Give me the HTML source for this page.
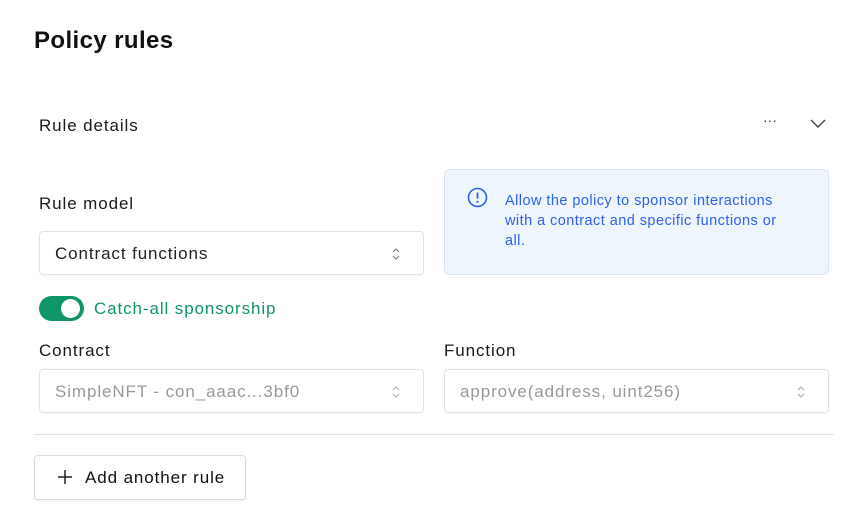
<!DOCTYPE html><html><head><style>
body{margin:0;width:863px;height:528px;background:#fff;font-family:"Liberation Sans",sans-serif;position:relative;overflow:hidden;color:#1a1a1a}
.a{position:absolute;letter-spacing:0.9px}
.sel{position:absolute;height:44px;border:1px solid #e2e2e2;border-radius:4px;box-sizing:border-box;font-size:17px;line-height:44px;padding-left:15px;letter-spacing:0.9px;box-shadow:0 1px 2px rgba(0,0,0,.04)}
.ud{position:absolute;right:22px;top:15px}
</style></head><body>
<div class="a" style="left:34px;top:27px;font-size:24px;font-weight:bold;color:#111;letter-spacing:0.4px">Policy rules</div>
<div class="a" style="left:39px;top:116px;font-size:17px">Rule details</div>
<div class="a" style="left:763px;top:112px;font-size:14px;color:#333;letter-spacing:0">···</div>
<svg class="a" style="left:810px;top:119px" width="16" height="10"><path d="M1 1l7 7 7-7" fill="none" stroke="#444" stroke-width="1.4"/></svg>
<div class="a" style="left:39px;top:194px;font-size:17px">Rule model</div>
<div class="sel" style="left:39px;top:231px;width:385px;color:#222">Contract functions<svg class="ud" width="10" height="14"><path d="M2 5l3-3 3 3M2 9l3 3 3-3" fill="none" stroke="#777" stroke-width="1.1"/></svg></div>
<div class="a" style="left:444px;top:169px;width:385px;height:106px;box-sizing:border-box;background:#eef5fd;border:1px solid #dde3ea;border-radius:5px"></div>
<svg class="a" style="left:467px;top:187px" width="21" height="21"><circle cx="10.5" cy="10.5" r="9" fill="none" stroke="#2e63e8" stroke-width="1.6"/><path d="M10.5 5.5v6" stroke="#2e63e8" stroke-width="1.8"/><circle cx="10.5" cy="14.8" r="1.1" fill="#2e63e8"/></svg>
<div class="a" style="left:505px;top:191px;width:295px;font-size:14.5px;line-height:20px;color:#2e63e8;letter-spacing:0.45px">Allow the policy to sponsor interactions with a contract and specific functions or all.</div>
<div class="a" style="left:39px;top:296px;width:45px;height:25px;border-radius:13px;background:#0f9566"></div>
<div class="a" style="left:61px;top:299px;width:19px;height:19px;border-radius:50%;background:#fff"></div>
<div class="a" style="left:94px;top:299px;font-size:17px;color:#0f9566">Catch-all sponsorship</div>
<div class="a" style="left:39px;top:341px;font-size:17px">Contract</div>
<div class="a" style="left:444px;top:341px;font-size:17px">Function</div>
<div class="sel" style="left:39px;top:369px;width:385px;color:#999">SimpleNFT - con_aaac...3bf0<svg class="ud" width="10" height="14"><path d="M2 5l3-3 3 3M2 9l3 3 3-3" fill="none" stroke="#aaa" stroke-width="1.1"/></svg></div>
<div class="sel" style="left:444px;top:369px;width:385px;color:#999">approve(address, uint256)<svg class="ud" width="10" height="14"><path d="M2 5l3-3 3 3M2 9l3 3 3-3" fill="none" stroke="#aaa" stroke-width="1.1"/></svg></div>
<div class="a" style="left:34px;top:434px;width:800px;height:1px;background:#e2e2e2"></div>
<div class="a" style="left:34px;top:455px;width:212px;height:45px;box-sizing:border-box;border:1px solid #ddd;border-radius:4px;box-shadow:0 1px 2px rgba(0,0,0,.06)"></div>
<svg class="a" style="left:57px;top:469px" width="16" height="16"><path d="M8 1v14M1 8h14" stroke="#222" stroke-width="1.5"/></svg>
<div class="a" style="left:85px;top:468px;font-size:17px;color:#111">Add another rule</div>
</body></html>
